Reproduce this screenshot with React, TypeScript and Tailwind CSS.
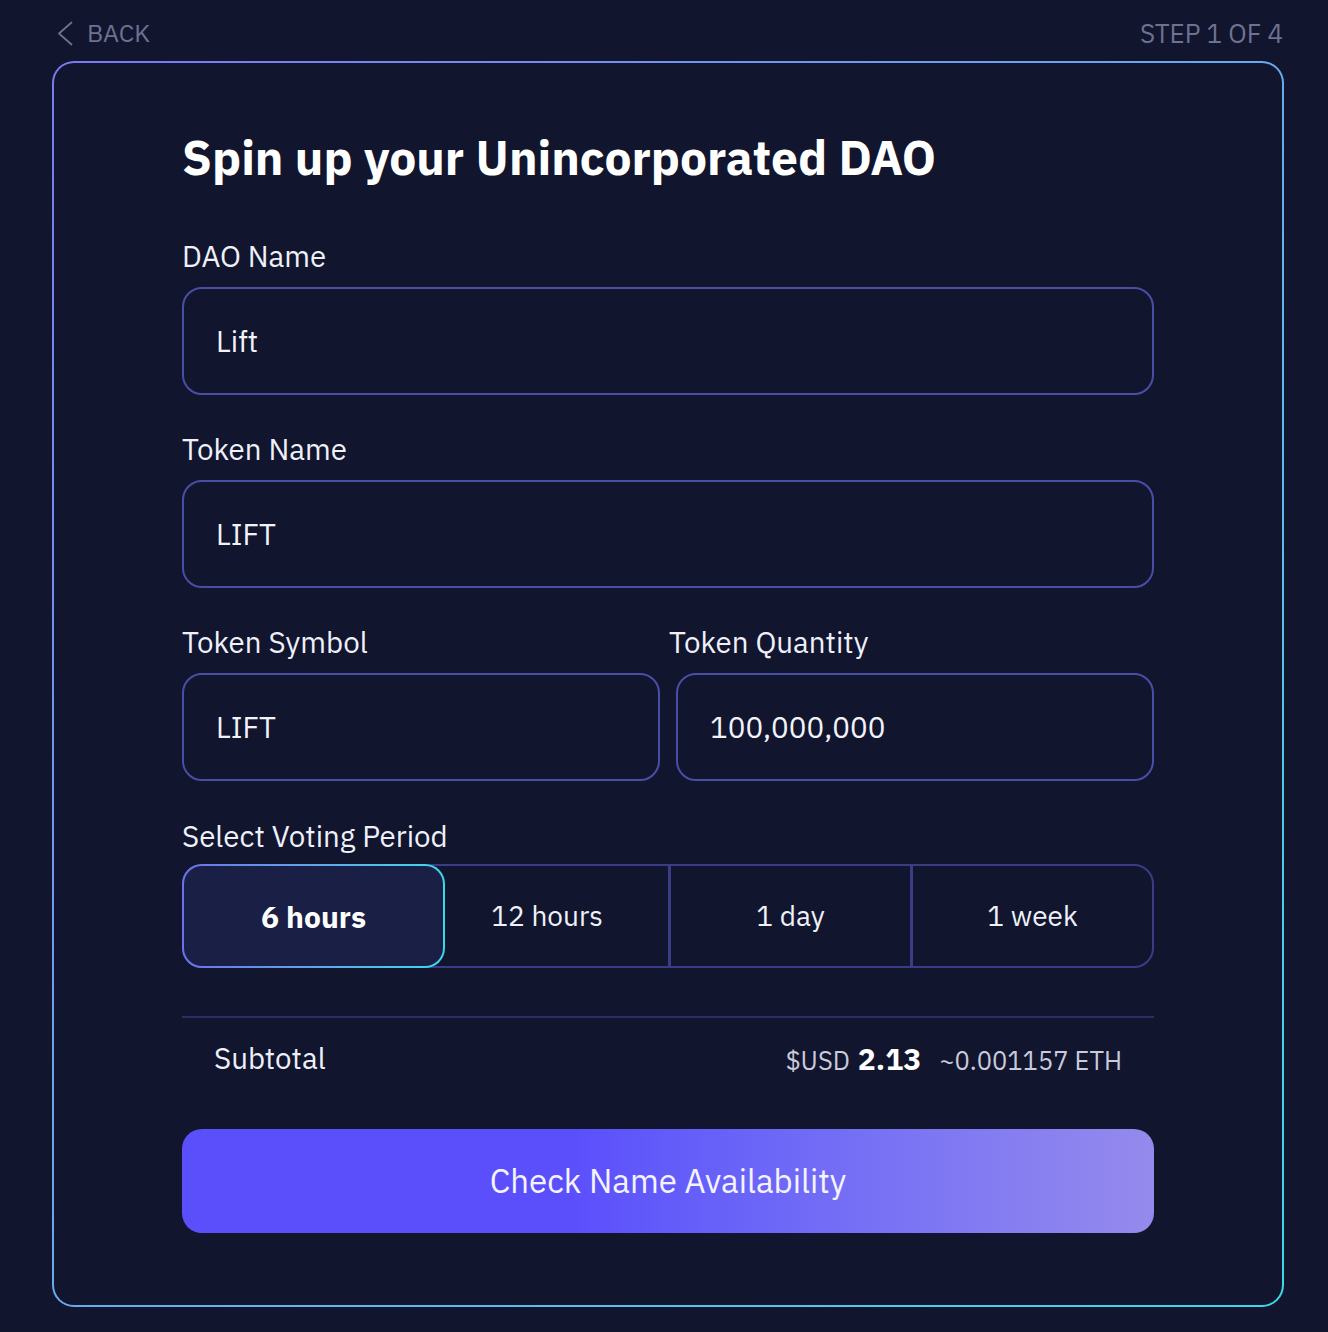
const font = { fontFamily: '"IBM Plex Sans", "Noto Sans", sans-serif' };

const Field = ({
  label,
  value,
  className,
  labelClass,
}: {
  label: string;
  value: string;
  className?: string;
  labelClass?: string;
}) => (
  <div className={className}>
    <div className={"text-[29.5px] leading-[34px] text-[#eef0fa] " + (labelClass ?? "")}>{label}</div>
    <div className="mt-[14px] flex h-[108px] items-center rounded-[20px] border-2 border-[#4a4da6] pl-[32px] text-[29.5px] text-[#f2f3fa]">
      {value}
    </div>
  </div>
);

const periods = ["12 hours", "1 day", "1 week"];

export default function App() {
  return (
    <div className="min-h-[1332px] w-[1328px] bg-[#11152e]" style={font}>
      <div className="flex h-[61px] items-center justify-between pl-[57px] pr-[45px] pt-[5px] text-[26px] text-[#6e7190]">
        <div className="flex items-center gap-[14px]">
          <svg width="16" height="25" viewBox="0 0 16 25" fill="none">
            <polyline points="14.5,1.5 2,12.5 14.5,23.5" stroke="#6e7190" strokeWidth="1.8" strokeLinecap="round" strokeLinejoin="round" />
          </svg>
          <span className="text-[25px]">BACK</span>
        </div>
        <span>STEP 1 OF 4</span>
      </div>

      <div className="mx-[52px] h-[1246px] w-[1232px] rounded-[22px] bg-gradient-to-br from-[#7a78f2] to-[#3ad9e8] p-[2px]">
        <div className="h-full w-full rounded-[20px] bg-[#11152e] pl-[128px] pr-[128px] pt-[64px]">
          <h1 className="text-[48px] font-bold leading-[60px] text-white">Spin up your Unincorporated DAO</h1>

          <Field className="mt-[52px]" label="DAO Name" value="Lift" />
          <Field className="mt-[37px]" label="Token Name" value="LIFT" />

          <div className="mt-[37px] grid grid-cols-2 gap-[16px]">
            <Field label="Token Symbol" value="LIFT" />
            <Field label="Token Quantity" value="100,000,000" labelClass="-ml-[7px]" />
          </div>

          <div className="mt-[38px] text-[29.5px] leading-[34px] text-[#eef0fa]">Select Voting Period</div>
          <div className="mt-[11px] grid h-[104px] grid-cols-4 rounded-[20px] border-2 border-[#3a3d85]">
            <div className="relative z-10 -my-[2px] -ml-[2px] w-[263px] rounded-[20px] bg-gradient-to-r from-[#6c70ea] to-[#3ad9e8] p-[2px]">
              <div className="flex h-full items-center justify-center rounded-[18px] bg-[#1a1f45] text-[30px] font-bold text-white">
                6 hours
              </div>
            </div>
            {periods.map((p, i) => (
              <div
                key={p}
                className={
                  i === 0
                    ? "flex items-center justify-center text-[28px] text-[#eef0fa]"
                    : "flex items-center justify-center border-l-[3px] border-[#3a3d85] text-[28px] text-[#eef0fa]"
                }
              >
                {p}
              </div>
            ))}
          </div>

          <div className="mt-[48px] h-[2px] bg-[#2a2d66]" />
          <div className="flex h-[84px] items-center justify-between px-[32px] pb-[3px]">
            <span className="text-[29.5px] text-[#eef0fa]">Subtotal</span>
            <div className="flex items-baseline text-[25.5px] text-[#c9cadb]">
              <span>$USD</span>
              <span className="ml-[8px] text-[30px] font-bold text-white">2.13</span>
              <span className="ml-[18px]">~0.001157 ETH</span>
            </div>
          </div>

          <button className="mt-[27px] flex h-[104px] w-full items-center justify-center rounded-[20px] bg-gradient-to-r from-[#5b4ffc] from-40% to-[#958aec] text-[33px] text-[#f4f3ff]">
            Check Name Availability
          </button>
        </div>
      </div>
    </div>
  );
}
